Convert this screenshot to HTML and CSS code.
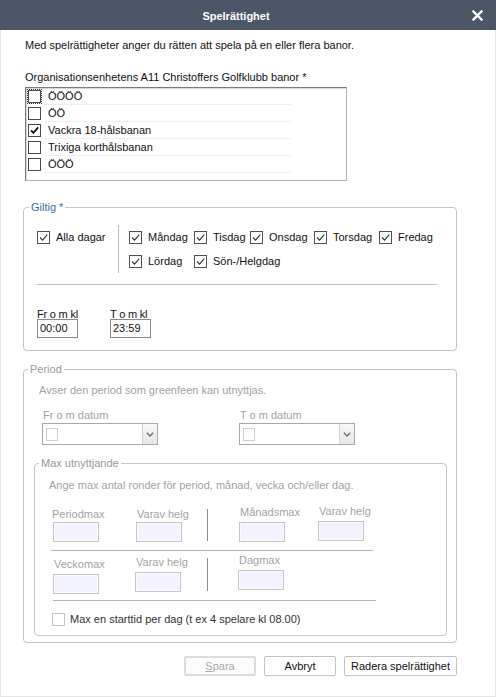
FILE: index.html
```html
<!DOCTYPE html>
<html lang="sv">
<head>
<meta charset="utf-8">
<title>Spelrättighet</title>
<link rel="stylesheet" href="styles.css">
</head>
<body>
<div class="dialog">
  <header class="titlebar">
    <span class="title">Spelrättighet</span>
    <span class="close"><svg width="11" height="11" viewBox="0 0 11 11"><path d="M1.5 1.5L9.5 9.5M9.5 1.5L1.5 9.5" stroke="#fff" stroke-width="2.4" stroke-linecap="square"/></svg></span>
  </header>
  <main class="content">
    <p class="intro">Med spelrättigheter anger du rätten att spela på en eller flera banor.</p>
    <div class="org-label">Organisationsenhetens A11 Christoffers Golfklubb banor *</div>
    <div class="listbox">
      <div class="lrow"><span class="lcb focus"></span><span class="ltext">ÖÖÖÖ</span></div>
      <div class="lrow"><span class="lcb"></span><span class="ltext">ÖÖ</span></div>
      <div class="lrow"><span class="lcb"><svg width="11" height="11" viewBox="0 0 11 11"><path d="M2 5.3l2.4 2.6 4.8-5.6" fill="none" stroke="#111" stroke-width="1.8"/></svg></span><span class="ltext">Vackra 18-hålsbanan</span></div>
      <div class="lrow"><span class="lcb"></span><span class="ltext">Trixiga korthålsbanan</span></div>
      <div class="lrow"><span class="lcb"></span><span class="ltext">ÖÖÖ</span></div>
    </div>

    <fieldset class="group giltig">
      <legend>Giltig *</legend>
      <div class="days">
        <div class="chk alla"><span class="cb"><svg width="11" height="11" viewBox="0 0 11 11"><path d="M2 5.5l2.6 2.6 4.6-5.4" fill="none" stroke="#333" stroke-width="1.1"/></svg></span>Alla dagar</div>
        <div class="daygrid">
          <div class="chk"><span class="cb"><svg width="11" height="11" viewBox="0 0 11 11"><path d="M2 5.5l2.6 2.6 4.6-5.4" fill="none" stroke="#333" stroke-width="1.1"/></svg></span>Måndag</div>
          <div class="chk"><span class="cb"><svg width="11" height="11" viewBox="0 0 11 11"><path d="M2 5.5l2.6 2.6 4.6-5.4" fill="none" stroke="#333" stroke-width="1.1"/></svg></span>Tisdag</div>
          <div class="chk"><span class="cb"><svg width="11" height="11" viewBox="0 0 11 11"><path d="M2 5.5l2.6 2.6 4.6-5.4" fill="none" stroke="#333" stroke-width="1.1"/></svg></span>Onsdag</div>
          <div class="chk"><span class="cb"><svg width="11" height="11" viewBox="0 0 11 11"><path d="M2 5.5l2.6 2.6 4.6-5.4" fill="none" stroke="#333" stroke-width="1.1"/></svg></span>Torsdag</div>
          <div class="chk"><span class="cb"><svg width="11" height="11" viewBox="0 0 11 11"><path d="M2 5.5l2.6 2.6 4.6-5.4" fill="none" stroke="#333" stroke-width="1.1"/></svg></span>Fredag</div>
          <div class="chk"><span class="cb"><svg width="11" height="11" viewBox="0 0 11 11"><path d="M2 5.5l2.6 2.6 4.6-5.4" fill="none" stroke="#333" stroke-width="1.1"/></svg></span>Lördag</div>
          <div class="chk"><span class="cb"><svg width="11" height="11" viewBox="0 0 11 11"><path d="M2 5.5l2.6 2.6 4.6-5.4" fill="none" stroke="#333" stroke-width="1.1"/></svg></span>Sön-/Helgdag</div>
        </div>
      </div>
      <div class="hr giltig-hr"></div>
      <div class="times">
        <div class="tfield"><span class="tlabel">Fr o m kl</span><span class="tbox">00:00</span></div>
        <div class="tfield"><span class="tlabel">T o m kl</span><span class="tbox">23:59</span></div>
      </div>
    </fieldset>

    <fieldset class="group period">
      <legend>Period</legend>
      <div class="period-intro">Avser den period som greenfeen kan utnyttjas.</div>
      <div class="dates">
        <div class="dgroup">
          <div class="dlabel">Fr o m datum</div>
          <div class="dropdown"><span class="dd-cb"></span><span class="dd-arrow"><svg width="8" height="5" viewBox="0 0 8 5"><path d="M0.8 0.8L4 4L7.2 0.8" fill="none" stroke="#6a6a6a" stroke-width="1.3"/></svg></span></div>
        </div>
        <div class="dgroup">
          <div class="dlabel">T o m datum</div>
          <div class="dropdown"><span class="dd-cb"></span><span class="dd-arrow"><svg width="8" height="5" viewBox="0 0 8 5"><path d="M0.8 0.8L4 4L7.2 0.8" fill="none" stroke="#6a6a6a" stroke-width="1.3"/></svg></span></div>
        </div>
      </div>

      <fieldset class="group maxgroup">
        <legend>Max utnyttjande</legend>
        <div class="max-intro">Ange max antal ronder för period, månad, vecka och/eller dag.</div>
        <div class="mrow row1">
          <div class="mcell c1 first"><span class="mlabel">Periodmax</span><span class="nbox"></span></div>
          <div class="mcell c2"><span class="mlabel">Varav helg</span><span class="nbox"></span></div>
          <div class="vline"></div>
          <div class="mcell c3 lift"><span class="mlabel">Månadsmax</span><span class="nbox"></span></div>
          <div class="mcell c4 lift2"><span class="mlabel">Varav helg</span><span class="nbox"></span></div>
        </div>
        <div class="hr mhr1"></div>
        <div class="mrow row2">
          <div class="mcell c1 down4"><span class="mlabel">Veckomax</span><span class="nbox"></span></div>
          <div class="mcell c2 down2"><span class="mlabel">Varav helg</span><span class="nbox"></span></div>
          <div class="vline"></div>
          <div class="mcell c3"><span class="mlabel">Dagmax</span><span class="nbox"></span></div>
        </div>
        <div class="hr mhr2"></div>
        <div class="chk maxchk"><span class="cb disabled"></span>Max en starttid per dag (t ex 4 spelare kl 08.00)</div>
      </fieldset>
    </fieldset>

    <div class="buttons">
      <button class="btn spara" disabled><u>S</u>para</button>
      <button class="btn">Avbryt</button>
      <button class="btn radera">Radera spelrättighet</button>
    </div>
  </main>
</div>
</body>
</html>
```

FILE: styles.css
```css
* { box-sizing: border-box; }

html, body {
  margin: 0;
  padding: 0;
  background: #fff;
}

body {
  font-family: "Liberation Sans", Arial, sans-serif;
  font-size: 11px;
  color: #1c1c1c;
}

.dialog {
  width: 496px;
  height: 697px;
  display: flex;
  flex-direction: column;
}

/* Title bar */
.titlebar {
  height: 30px;
  flex: none;
  background: #4b5666;
  color: #fff;
  display: flex;
  align-items: center;
}

.title {
  flex: 1;
  text-align: center;
  font-weight: bold;
  font-size: 11px;
  padding-top: 1px;
}

.close {
  width: 24px;
  display: flex;
  align-items: center;
  padding-top: 1px;
}

.close svg { display: block; }

/* Content */
.content {
  flex: 1;
  padding: 8px 0 0 24px;
  border: 1px solid #e6e6e6;
  border-top: 0;
}

.intro {
  margin: 0;
  line-height: 14px;
  color: #111;
}

.org-label {
  margin-top: 18px;
  line-height: 14px;
  color: #111;
}

/* Listbox */
.listbox {
  margin-top: 3px;
  width: 322px;
  height: 94px;
  border: 1px solid #b4b4b4;
  border-top-color: #7c7c7c;
  border-left-color: #7c7c7c;
  box-shadow: inset 1px 1px 0 #d8d8d8;
  padding: 0 0 0 2px;
}

.lrow {
  display: flex;
  align-items: center;
  height: 17px;
}

.lcb {
  width: 13px;
  height: 13px;
  flex: none;
  border: 1px solid #4a4a4a;
  background: #fff;
  display: flex;
  align-items: center;
  justify-content: center;
}

.lcb svg { display: block; }

.lcb.focus {
  outline: 1px dotted #333;
  outline-offset: 0;
}

.ltext {
  margin-left: 3px;
  width: 247px;
  height: 17px;
  line-height: 16px;
  padding-left: 4px;
  border-bottom: 1px solid #efefef;
  color: #111;
}

/* Fieldsets */
.group {
  border: 1px solid #c6c6c6;
  border-radius: 4px;
  min-width: 0;
}

.group legend {
  padding: 0 2px;
  line-height: 14px;
  font-size: 11px;
}

.giltig {
  margin: 19px 0 0 -2px;
  width: 434px;
  padding: 11px 13px 12px 13px;
}

.giltig legend {
  color: #3d6fa8;
  margin-left: -8px;
}

.days {
  display: flex;
  align-items: flex-start;
}

.chk {
  display: flex;
  align-items: center;
  gap: 6px;
  height: 14px;
  line-height: 14px;
  white-space: nowrap;
  color: #111;
}

.cb {
  width: 13px;
  height: 13px;
  flex: none;
  border: 1px solid #505050;
  background: #fff;
  display: flex;
  align-items: center;
  justify-content: center;
}

.cb svg { display: block; }

.cb.disabled { border-color: #c4c4c4; }

.alla {
  width: 81px;
  margin-top: 5px;
}

.daygrid {
  border-left: 1px solid #b9b9b9;
  padding: 5px 0 5px 10px;
  display: grid;
  grid-template-columns: 65px 56px 64px 65px auto;
  row-gap: 10px;
}

.hr {
  height: 1px;
  background: #bdbdbd;
}

.giltig-hr {
  margin-top: 11px;
  width: 400px;
}

.times {
  margin-top: 24px;
  display: flex;
  gap: 32px;
}

.tfield {
  width: 41px;
  display: flex;
  flex-direction: column;
}

.tlabel {
  height: 10px;
  line-height: 11px;
  white-space: nowrap;
  color: #111;
  letter-spacing: -0.2px;
}

.tbox {
  width: 41px;
  height: 19px;
  border: 1px solid #8a8a8a;
  padding-left: 2px;
  line-height: 17px;
  color: #111;
}

/* Period */
.period {
  margin: 11px 0 0 -2px;
  width: 434px;
  padding: 7px 9px 6px 10px;
  color: #a3a3a3;
}

.period legend {
  color: #9a9a9a;
  margin-left: -6px;
}

.period-intro {
  margin-left: 5px;
  line-height: 14px;
}

.dates {
  margin: 11px 0 0 8px;
  display: flex;
}

.dgroup { width: 197px; }

.dlabel {
  padding-left: 1px;
  line-height: 14px;
  margin-bottom: 1px;
}

.dropdown {
  width: 116px;
  height: 22px;
  border: 1px solid #a9a9a9;
  display: flex;
  align-items: center;
  padding: 0 0 0 3px;
}

.dd-cb {
  width: 12px;
  height: 13px;
  border: 1px solid #cfcfcf;
  background: #fff;
}

.dd-arrow {
  margin-left: auto;
  width: 15px;
  height: 20px;
  background: linear-gradient(#f8f8f8, #e6e6e6);
  border-left: 1px solid #d2d2d2;
  display: flex;
  align-items: center;
  justify-content: center;
}

.dd-arrow svg { display: block; }

/* Max utnyttjande */
.maxgroup {
  margin: 11px 0 0 0;
  width: 413px;
  padding: 8px 10px 9px 14px;
}

.maxgroup legend {
  color: #9a9a9a;
  margin-left: -10px;
}

.max-intro {
  line-height: 14px;
}

.mrow {
  display: flex;
  align-items: flex-start;
}

.row1 { margin-top: 15px; }
.row2 { margin-top: 2px; }

.mcell {
  display: flex;
  flex-direction: column;
}

.mlabel {
  line-height: 14px;
  padding-left: 1px;
  white-space: nowrap;
}

.first .mlabel { margin-left: -2px; }

.row1 .mcell .nbox { margin-top: 1px; }
.row1 .lift .mlabel { margin-top: -2px; margin-bottom: 2px; }
.row1 .lift2 .mlabel { margin-top: -3px; margin-bottom: 2px; }

.row2 .mcell .nbox { margin-top: 3px; }
.row2 .down4 { margin-top: 4px; }
.row2 .down2 { margin-top: 2px; }

.c1 { margin-left: 4px; width: 83px; }
.c2 { width: 71px; }
.c3 { margin-left: 31px; width: 79px; }
.c4 { width: 46px; }

.row2 .c2 { margin-left: -1px; width: 72px; }
.row2 .c3 { margin-left: 30px; }

.nbox {
  width: 46px;
  height: 20px;
  border: 1px solid #c6c6c6;
  background: #f3f3ff;
  box-shadow: inset 0 0 0 1px #fbfbff;
}

.vline {
  width: 1px;
  background: #8e8e8e;
}

.row1 .vline { height: 32px; margin-top: 2px; }
.row2 .vline { height: 33px; margin-top: 5px; }

.mhr1 {
  margin: 8px 0 0 2px;
  width: 322px;
  background: #b5b5b5;
}

.mhr2 {
  margin: 6px 0 0 4px;
  width: 323px;
  background: #b5b5b5;
}

.maxchk {
  margin: 11px 0 0 3px;
  gap: 5px;
  color: #333;
}

/* Buttons */
.buttons {
  margin: 13px 0 0 -2px;
  width: 434px;
  display: flex;
  justify-content: flex-end;
  gap: 8px;
}

.btn {
  width: 72px;
  height: 20px;
  padding: 0;
  font-family: "Liberation Sans", Arial, sans-serif;
  font-size: 11px;
  color: #111;
  background: #fff;
  border: 1px solid #c4c4c4;
  border-radius: 2px;
}

.btn.spara {
  color: #a8a8a8;
  border: 2px solid #dcdcdc;
  background: #fcfcfc;
}

.btn.radera { width: 113px; }
```
